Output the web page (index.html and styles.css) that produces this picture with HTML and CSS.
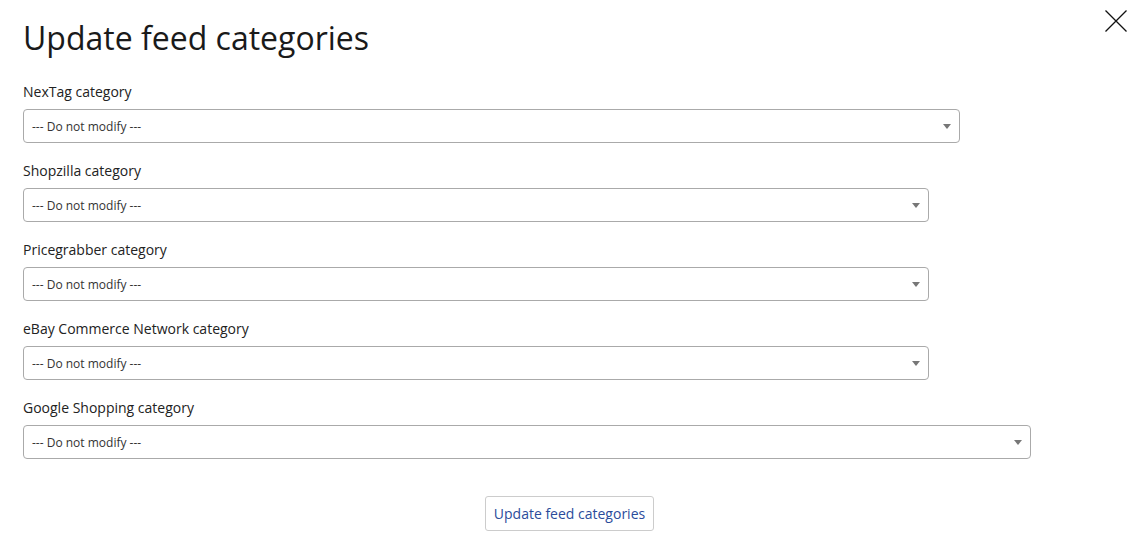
FILE: index.html
```html
<!DOCTYPE html>
<html>
<head>
<meta charset="utf-8">
<link rel="stylesheet" href="styles.css">
</head>
<body>
<div class="modal">
  <button class="close" aria-label="Close">
    <svg width="22" height="22" viewBox="0 0 22 22"><path d="M0.5 0.5 L21.5 21.5 M21.5 0.5 L0.5 21.5" stroke="#111" stroke-width="1.3" fill="none"/></svg>
  </button>
  <h1 class="title">Update feed categories</h1>
  <div class="field">
    <div class="label">NexTag category</div>
    <div class="select w-nextag"><span>--- Do not modify ---</span><svg class="arrow" width="8" height="5" viewBox="0 0 8 5"><path d="M0 0 H8 L4 5 Z" fill="#777"/></svg></div>
  </div>
  <div class="field">
    <div class="label">Shopzilla category</div>
    <div class="select w-mid"><span>--- Do not modify ---</span><svg class="arrow" width="8" height="5" viewBox="0 0 8 5"><path d="M0 0 H8 L4 5 Z" fill="#777"/></svg></div>
  </div>
  <div class="field">
    <div class="label">Pricegrabber category</div>
    <div class="select w-mid"><span>--- Do not modify ---</span><svg class="arrow" width="8" height="5" viewBox="0 0 8 5"><path d="M0 0 H8 L4 5 Z" fill="#777"/></svg></div>
  </div>
  <div class="field">
    <div class="label">eBay Commerce Network category</div>
    <div class="select w-mid"><span>--- Do not modify ---</span><svg class="arrow" width="8" height="5" viewBox="0 0 8 5"><path d="M0 0 H8 L4 5 Z" fill="#777"/></svg></div>
  </div>
  <div class="field">
    <div class="label">Google Shopping category</div>
    <div class="select w-google"><span>--- Do not modify ---</span><svg class="arrow" width="8" height="5" viewBox="0 0 8 5"><path d="M0 0 H8 L4 5 Z" fill="#777"/></svg></div>
  </div>
  <div class="actions">
    <button class="btn">Update feed categories</button>
  </div>
</div>
</body>
</html>
```
FILE: styles.css
```css
html, body {
  margin: 0;
  padding: 0;
  background: #fff;
}
body {
  font-family: "Open Sans", "Liberation Sans", sans-serif;
  color: #222;
}
.modal {
  position: relative;
  padding: 18px 23px 0 23px;
  width: 1139px;
  box-sizing: border-box;
}
.close {
  position: absolute;
  top: 10px;
  right: 12px;
  padding: 0;
  margin: 0;
  border: 0;
  background: none;
  width: 22px;
  height: 22px;
  display: block;
}
.close svg { display: block; }
.title {
  margin: 0 0 24px 0;
  font-size: 32px;
  line-height: 40px;
  font-weight: 400;
  color: #1a1a1a;
}
.field {
  margin-bottom: 18px;
}
.label {
  font-size: 14px;
  line-height: 20px;
  color: #222;
  margin-bottom: 7px;
}
.select {
  height: 34px;
  box-sizing: border-box;
  border: 1px solid #aaa;
  border-radius: 4px;
  display: flex;
  align-items: center;
  justify-content: space-between;
  padding: 0 8px 0 8px;
  font-size: 12px;
  color: #333;
}
.arrow { display: block; }
.w-nextag { width: 937px; }
.w-mid { width: 906px; }
.w-google { width: 1008px; }
.actions {
  display: flex;
  justify-content: center;
  padding-top: 19px;
}
.btn {
  font-family: "Open Sans", "Liberation Sans", sans-serif;
  font-size: 14px;
  color: #2b4c9b;
  background: #fff;
  border: 1px solid #ccc;
  border-radius: 3px;
  height: 35px;
  padding: 0 8px;
}
```
